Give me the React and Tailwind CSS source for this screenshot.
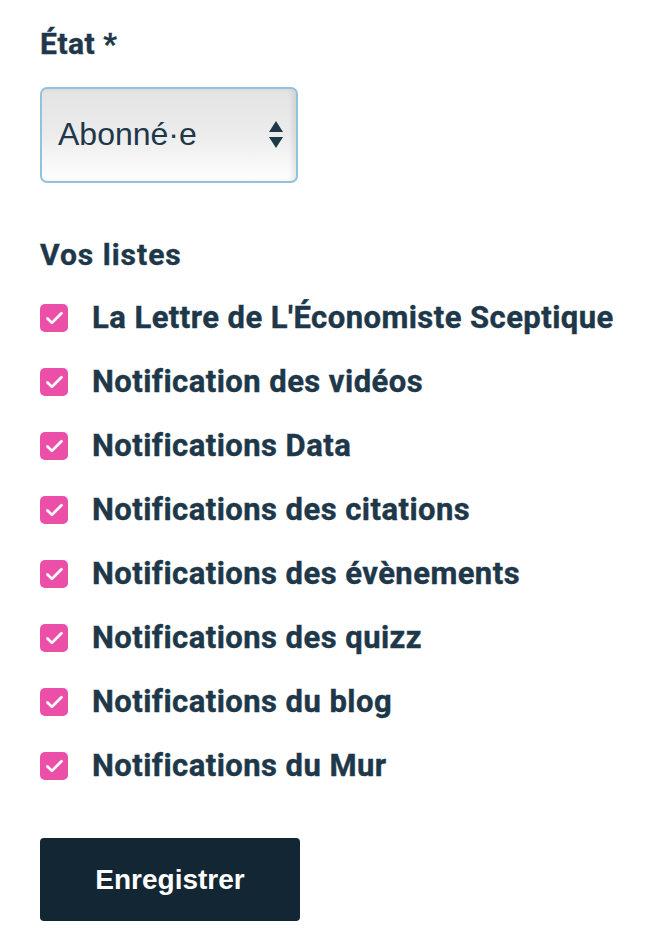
import { Check } from 'lucide-react';

const lists = [
  "La Lettre de L'Économiste Sceptique",
  'Notification des vidéos',
  'Notifications Data',
  'Notifications des citations',
  'Notifications des évènements',
  'Notifications des quizz',
  'Notifications du blog',
  'Notifications du Mur',
];

export default function App() {
  return (
    <div className="min-h-screen bg-white px-10 pt-[26px] text-[#1e384a] [font-family:Roboto,'Noto_Sans',sans-serif]">
      <label className="block text-[30px] font-bold leading-[36px] tracking-[0.5px] [-webkit-text-stroke:0.4px_#1e384a]">État *</label>

      <div className="relative mt-[25px] h-[96px] w-[258px] rounded-[7px] border-2 border-[#93c2de] bg-gradient-to-b from-[#e4e4e4] via-[#ececec] to-white shadow-[inset_-4px_0_4px_rgba(0,0,0,0.08)]">
        <div className="flex h-full items-center pl-[16px] pb-[2px] text-[32px] [font-family:'Liberation_Sans',Arial,sans-serif]">
          Abonné·e
        </div>
        <svg className="absolute right-[12px] top-[31px]" width="16" height="30" viewBox="0 0 16 30">
          <path d="M8 1 L15 12 L1 12 Z" fill="#1e384a" />
          <path d="M1 17 L15 17 L8 28 Z" fill="#1e384a" />
        </svg>
      </div>

      <h3 className="mt-[54px] text-[30px] font-bold leading-[36px] tracking-[1px] [-webkit-text-stroke:0.4px_#1e384a]">Vos listes</h3>

      <ul className="mt-[31px] flex flex-col gap-[36px]">
        {lists.map((name) => (
          <li key={name} className="flex h-[28px] items-center gap-[24px]">
            <span className="flex h-[28px] w-[28px] shrink-0 items-center justify-center rounded-[5px] bg-[#ec4fa8]">
              <Check className="h-[21px] w-[21px] text-white" strokeWidth={3.2} />
            </span>
            <span className="whitespace-nowrap text-[31px] font-bold leading-[28px] tracking-[0.45px] [-webkit-text-stroke:0.4px_#1e384a]">{name}</span>
          </li>
        ))}
      </ul>

      <button className="mt-[58px] flex h-[83px] w-[260px] items-center justify-center rounded-[4px] bg-[#122633] text-[28px] font-bold text-white [font-family:'Liberation_Sans',Arial,sans-serif]">
        Enregistrer
      </button>
    </div>
  );
}
